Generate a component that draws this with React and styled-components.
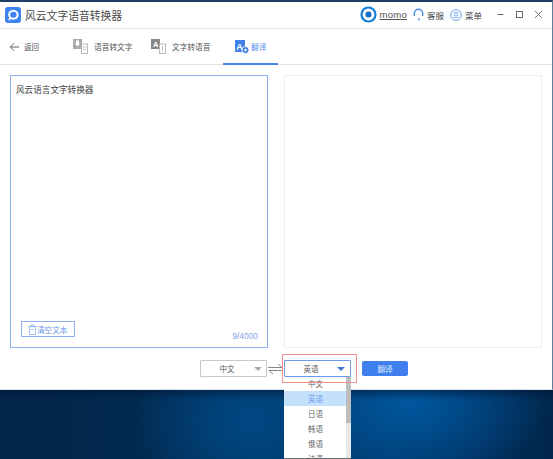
import React from 'react';
import styled, { createGlobalStyle } from 'styled-components';

const Global = createGlobalStyle`
  html, body { margin: 0; padding: 0; background: #02294f; }
  * { box-sizing: border-box; }
`;

const Desktop = styled.div`
  width: 553px; height: 459px; overflow: hidden; position: relative;
  font-family: "Noto Sans CJK SC", "Liberation Sans", sans-serif;
  background:
    linear-gradient(180deg, rgba(0,20,50,.5) 390px, rgba(0,20,50,0) 400px),
    radial-gradient(ellipse 140px 85px at 410px 405px, rgba(1,88,160,.95) 0%, rgba(1,80,148,.6) 50%, rgba(1,70,130,0) 100%),
    radial-gradient(ellipse 120px 90px at 250px 420px, rgba(1,74,136,.9) 0%, rgba(0,70,130,.4) 60%, rgba(0,60,120,0) 100%),
    linear-gradient(90deg, #012548 0%, #02294f 25%, #013765 45%, #003b70 70%, #012d58 88%, #01264b 100%);
`;
const Win = styled.div`
  position: relative;
  width: 553px; height: 390px; background: #fff; display: flex; flex-direction: column;
  border-top: 2px solid #1c3f66; border-right: 1px solid #5f7f99; border-bottom: 1px solid #dfe3e8;
`;
const TitleBar = styled.header`
  height: 27px; flex: none; display: flex; align-items: center; padding: 0 9px 1px 5px;
  border-bottom: 1px solid #e6e6e6;
`;
const Logo = styled.svg`width: 16px; height: 16px; flex: none;`;
const AppName = styled.div`margin-left: 4px; font-size: 10.8px; color: #4a4a4a; flex: 1;`;
const User = styled.span`
  margin-left: 3px; font-family: "Liberation Sans", sans-serif; font-size: 9.6px; color: #555;
  text-decoration: underline; letter-spacing: .2px;
`;
const HeadItem = styled.div`display: flex; align-items: center; margin-left: ${p => p.$ml}px;`;
const HeadLabel = styled.span`font-size: 8.5px; color: #444; margin-left: 3px;`;
const WinBtns = styled.div`display: flex; align-items: center; gap: 10px; margin-left: 14px;`;
const WinIcon = styled.svg`width: 9px; height: 9px; display: block;`;

const TabBar = styled.nav`
  height: 36px; flex: none; display: flex; align-items: stretch; padding-left: 9px;
  border-bottom: 1px solid #e3e3e3;
`;
const Back = styled.div`display: flex; align-items: center; width: 64px; font-size: 7.5px; color: #555; gap: 4px;`;
const Tab = styled.div`
  position: relative; display: flex; align-items: center; gap: ${p => p.$gap}px; width: ${p => p.$w}px;
  padding-left: ${p => p.$pl || 0}px;
  font-size: 7.7px; color: ${p => p.$active ? '#5b8fe8' : '#555'};
  ${p => p.$active && `&::after { content: ''; position: absolute; left: 0; right: 0; bottom: -1px; height: 2px; background: #4a86e8; }`}
`;
const TabIcon = styled.svg`width: 15px; height: 15px; flex: none; margin-top: -1px;`;

const Body = styled.main`flex: 1; display: flex; flex-direction: column; padding: 10px 10px 0 10px;`;
const Panels = styled.div`display: flex; gap: 16px; height: 273px;`;
const InputPanel = styled.div`
  width: 258px; border: 1px solid #8ab0f2; display: flex; flex-direction: column; padding: 7px 9px 6px 5px;
`;
const OutputPanel = styled.div`width: 258px; border: 1px solid #eeeeee;`;
const SourceText = styled.div`font-size: 8.6px; color: #3c3c3c; line-height: 12px; flex: 1;`;
const PanelFoot = styled.div`display: flex; align-items: flex-end; justify-content: space-between; padding-left: 5px;`;
const ClearBtn = styled.button`
  width: 54px; height: 16px; margin-bottom: 4px; padding: 0 0 0 6px; background: #fff; border: 1px solid #8ab0f2; display: flex; align-items: center;
  font-family: inherit; font-size: 7.6px; color: #6f9be8; border-radius: 0;
`;
const Count = styled.span`font-size: 8.4px; color: #7ea4ea; font-family: "Liberation Sans", sans-serif; line-height: 9px;`;

const Controls = styled.div`display: flex; align-items: center; height: 17px; margin-top: 12px; padding-left: 190px;`;
const Select = styled.div`
  position: relative; width: 67px; height: 17px; border: 1px solid ${p => p.$open ? '#6f9be8' : '#c8c8c8'};
  display: flex; align-items: center; justify-content: center; padding-right: 13px;
  font-size: 7.5px; color: #555; background: #fff; border-radius: 1px;
`;
const Caret = styled.i`
  position: absolute; right: ${p => p.$r}px; top: 6px; width: 0; height: 0;
  border-left: 4px solid transparent; border-right: 4px solid transparent;
  border-top: 4px solid ${p => p.$open ? '#3f74d0' : '#a8a8a8'};
`;
const SwapIcon = styled.svg`width: 17px; height: 12px; flex: none;`;
const PrimaryBtn = styled.button`
  width: 46px; height: 15px; margin-left: 11px; border: 0; border-radius: 2px; background: #3f80ee; color: #dfe9fb;
  font-family: inherit; font-size: 7.6px; padding: 0;
`;

const Highlight = styled.div`
  position: absolute; left: 282px; top: 354px; width: 75px; height: 29px; border: 1px solid #f58f8f; pointer-events: none;
`;
const Dropdown = styled.ul`
  position: absolute; left: 284px; top: 377px; width: 67px; height: 82px; margin: 0; padding: 0; list-style: none; background: #fff;
  overflow: hidden; border-bottom: 1px solid #6a7078;
`;
const Option = styled.li`
  height: 15px; line-height: 15px; margin-top: ${p => p.$first ? '-1px' : '0'}; padding-right: 4px; text-align: center; font-size: 7.5px;
  color: ${p => p.$sel ? '#6f9be8' : '#666'}; background: ${p => p.$sel ? '#c4e1fc' : 'transparent'};
`;
const ScrollThumb = styled.div`
  position: absolute; right: 0; top: 0; width: 5px; height: 46px; background: #bdbdbd;
`;
const ScrollTrack = styled.div`position: absolute; right: 0; top: 0; bottom: 0; width: 5px; background: #e8e8e8;`;

export default function App() {
  return (
    <Desktop>
      <Global />
      <Win>
        <TitleBar>
          <Logo viewBox="0 0 16 16">
            <rect width="16" height="16" rx="3" fill="#3d84f0" />
            <ellipse cx="8.4" cy="7.8" rx="5.2" ry="4.9" fill="#fff" />
            <ellipse cx="8.4" cy="7.8" rx="3.2" ry="3" fill="#3d84f0" />
            <path d="M4 11l-.8 2.6 3-1.2z" fill="#fff" />
          </Logo>
          <AppName>风云文字语音转换器</AppName>
          <svg width="17" height="17" viewBox="0 0 17 17" style={{ flex: 'none' }}>
            <circle cx="8.5" cy="8.5" r="7" fill="#fff" stroke="#0f7fdc" strokeWidth="2.2" />
            <circle cx="8.5" cy="8.5" r="3" fill="#0b6fc8" />
          </svg>
          <User>momo</User>
          <HeadItem $ml={6}>
            <svg width="11" height="13" viewBox="0 0 11 13">
              <path d="M1.3 8V5.5a4.2 4.2 0 0 1 8.4 0V8" fill="none" stroke="#4a90e8" strokeWidth="1.4" />
              <circle cx="5.8" cy="11.3" r="1" fill="#4a90e8" />
            </svg>
            <HeadLabel>客服</HeadLabel>
          </HeadItem>
          <HeadItem $ml={6}>
            <svg width="12" height="12" viewBox="0 0 12 12">
              <circle cx="6" cy="6" r="5.3" fill="none" stroke="#6aa0ea" strokeWidth="1" />
              <path d="M3.5 3.7h5M3.5 6h5M3.5 8.3h5" stroke="#6aa0ea" strokeWidth="1" />
            </svg>
            <HeadLabel>菜单</HeadLabel>
          </HeadItem>
          <WinBtns>
            <WinIcon viewBox="0 0 9 9"><path d="M1.5 4.5h6" stroke="#666" strokeWidth="1" /></WinIcon>
            <WinIcon viewBox="0 0 9 9"><rect x="1.5" y="1.5" width="6" height="6" fill="none" stroke="#666" strokeWidth="1" /></WinIcon>
            <WinIcon viewBox="0 0 9 9"><path d="M1 1l7 7M8 1L1 8" stroke="#777" strokeWidth="1" /></WinIcon>
          </WinBtns>
        </TitleBar>
        <TabBar>
          <Back>
            <svg width="11" height="10" viewBox="0 0 12 10">
              <path d="M11 5H1.5M5.5 1L1.5 5l4 4" fill="none" stroke="#555" strokeWidth="1" />
            </svg>
            返回
          </Back>
          <Tab $w={78} $gap={6}>
            <TabIcon viewBox="0 0 15 15">
              <rect x="0" y="0" width="9" height="10" fill="#aaa" />
              <path d="M3 1.5h3v3h1.2L4.5 7.5 1.8 4.5H3z" fill="#fff" />
              <rect x="8.5" y="5" width="6" height="9.5" fill="#fff" stroke="#aaa" strokeWidth=".8" />
              <path d="M10 8h3M10 10.5h3" stroke="#aaa" strokeWidth=".7" />
            </TabIcon>
            语音转文字
          </Tab>
          <Tab $w={72} $gap={6}>
            <TabIcon viewBox="0 0 15 15">
              <rect x="0" y="0" width="9" height="10" fill="#888" />
              <text x="2" y="8" fontSize="7.5" fill="#fff" fontFamily="Liberation Sans" fontWeight="700">A</text>
              <rect x="8.5" y="5" width="6" height="9.5" fill="#fff" stroke="#aaa" strokeWidth=".8" />
              <path d="M11.5 7v5" stroke="#aaa" strokeWidth=".8" />
            </TabIcon>
            文字转语音
          </Tab>
          <Tab $w={55} $pl={12} $gap={1} $active>
            <TabIcon viewBox="0 0 15 15">
              <rect x="0" y="1" width="10" height="12" fill="#3f7fe8" />
              <text x="1.3" y="10.5" fontSize="9" fill="#fff" fontFamily="Liberation Sans" fontWeight="700">A</text>
              <circle cx="10.5" cy="11" r="3.5" fill="#3f7fe8" stroke="#fff" strokeWidth=".8" />
              <circle cx="10.5" cy="11" r="1.2" fill="#fff" />
            </TabIcon>
            翻译
          </Tab>
        </TabBar>
        <Body>
          <Panels>
            <InputPanel>
              <SourceText>风云语言文字转换器</SourceText>
              <PanelFoot>
                <ClearBtn>
                  <svg width="9" height="11" viewBox="0 0 9 11" style={{ flex: 'none' }}>
                    <path d="M1.5 2.5h6v8h-6zM.5 2.5h8M3 2.5V1h3v1.5M3 5.5h3" fill="none" stroke="#8ab0f2" strokeWidth=".8" />
                  </svg>
                  清空文本
                </ClearBtn>
                <Count>9/4000</Count>
              </PanelFoot>
            </InputPanel>
            <OutputPanel />
          </Panels>
          <Controls>
            <Select>中文<Caret $r={4} /></Select>
            <SwapIcon viewBox="0 0 17 12">
              <path d="M1 4.5h14L11 1M16 7.5H2L6 11" fill="none" stroke="#777" strokeWidth=".9" />
            </SwapIcon>
            <Select $open>英语<Caret $r={5} $open /></Select>
            <PrimaryBtn>翻译</PrimaryBtn>
          </Controls>
        </Body>
      </Win>
      <Dropdown>
        <Option $first>中文</Option>
        <Option $sel>英语</Option>
        <Option>日语</Option>
        <Option>韩语</Option>
        <Option>俄语</Option>
        <Option>法语</Option>
        <ScrollTrack />
        <ScrollThumb />
      </Dropdown>
      <Highlight />
    </Desktop>
  );
}
